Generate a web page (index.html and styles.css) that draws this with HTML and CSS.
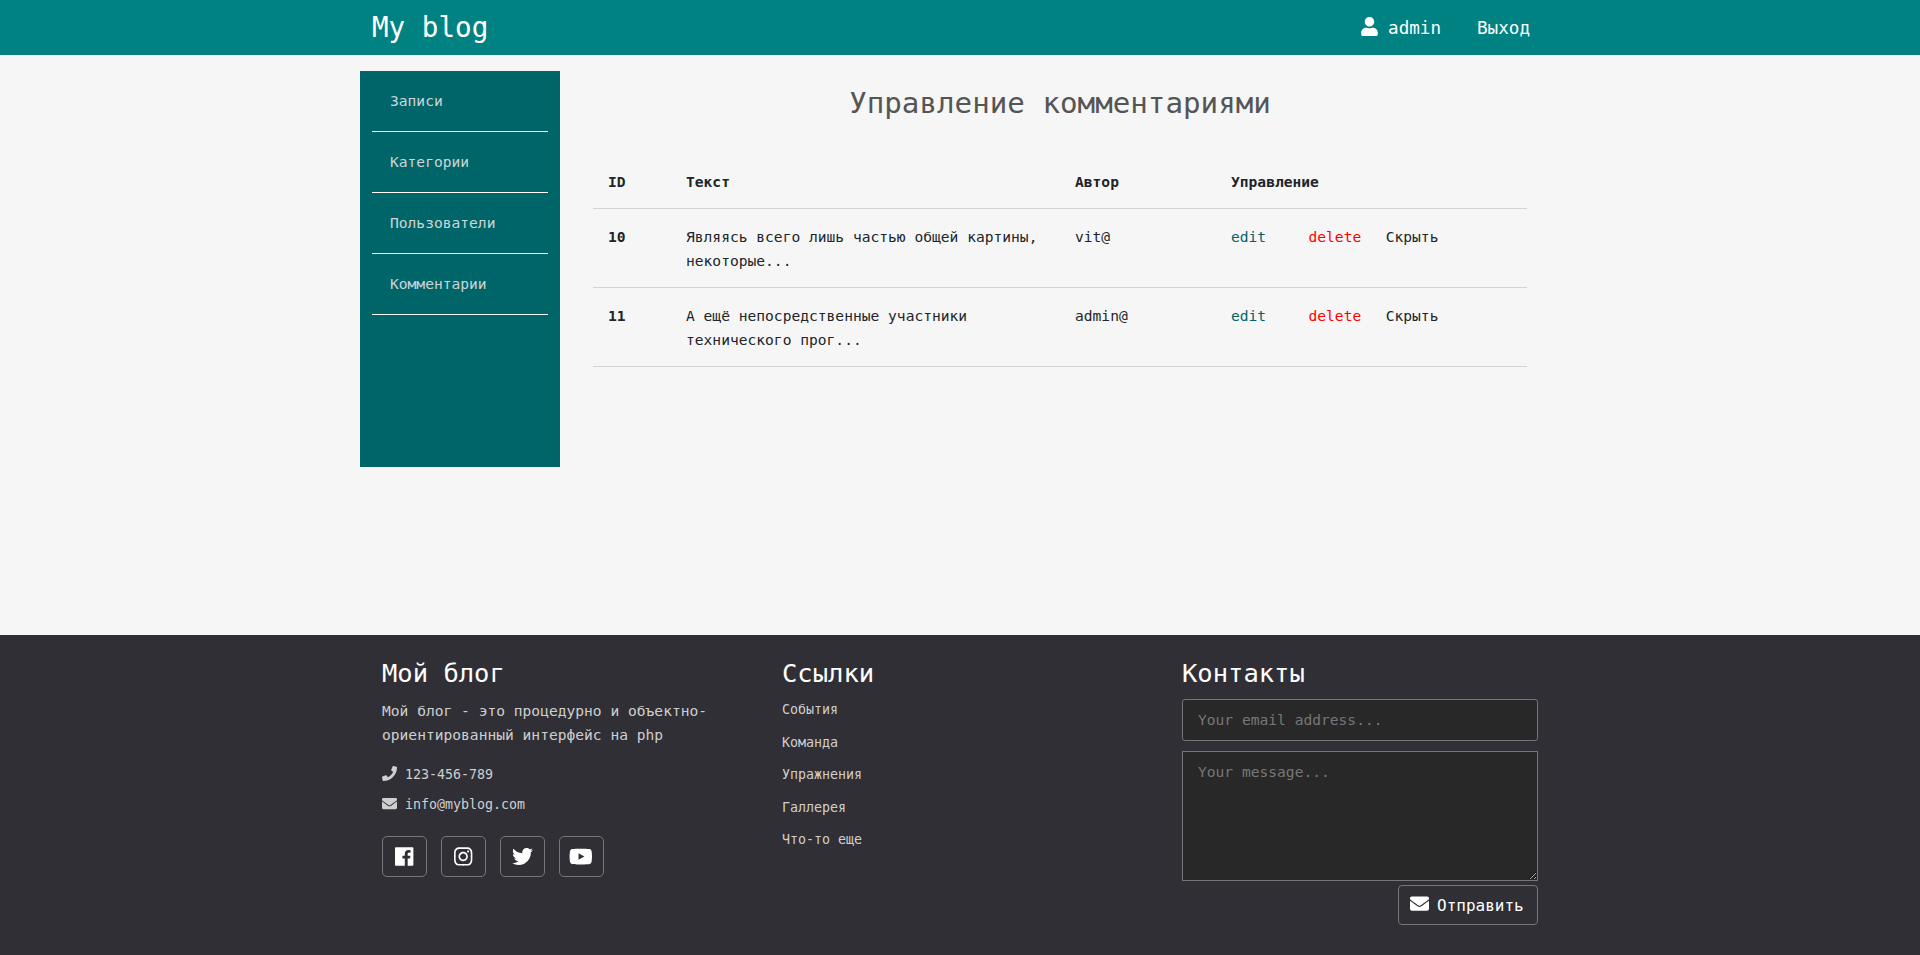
FILE: index.html
```html
<!DOCTYPE html>
<html lang="ru">
<head>
  <meta charset="UTF-8" />
  <meta name="viewport" content="width=device-width, initial-scale=1.0"/>
  <title>My blog</title>
  <link rel="stylesheet" href="styles.css">
</head>
<body>
  <header class="topbar">
    <div class="wrap topbar-inner">
      <a class="logo" href="#">My blog</a>
      <nav class="user-nav">
        <a href="#" class="user-link">
          <svg class="icon-user" viewBox="0 0 448 512"><path d="M224 256c70.7 0 128-57.3 128-128S294.7 0 224 0 96 57.3 96 128s57.3 128 128 128zm89.6 32h-16.7c-22.2 10.2-46.9 16-72.9 16s-50.6-5.8-72.9-16h-16.7C60.2 288 0 348.2 0 422.4V464c0 26.5 21.5 48 48 48h352c26.5 0 48-21.5 48-48v-41.6c0-74.2-60.2-134.4-134.4-134.4z"/></svg>
          admin
        </a>
        <a href="#">Выход</a>
      </nav>
    </div>
  </header>

  <div class="wrap page">
    <aside class="sidebar">
      <ul>
        <li><a href="#">Записи</a></li>
        <li><a href="#">Категории</a></li>
        <li><a href="#">Пользователи</a></li>
        <li><a href="#">Комментарии</a></li>
      </ul>
    </aside>

    <main class="content">
      <h1>Управление комментариями</h1>
      <table class="comments">
        <thead>
          <tr>
            <th class="col-id">ID</th>
            <th class="col-text">Текст</th>
            <th class="col-author">Автор</th>
            <th>Управление</th>
          </tr>
        </thead>
        <tbody>
          <tr>
            <td class="row-id">10</td>
            <td>Являясь всего лишь частью общей картины, некоторые...</td>
            <td>vit@</td>
            <td>
              <div class="actions">
                <a class="edit" href="#">edit</a>
                <a class="delete" href="#">delete</a>
                <a class="hide" href="#">Скрыть</a>
              </div>
            </td>
          </tr>
          <tr>
            <td class="row-id">11</td>
            <td>А ещё непосредственные участники технического прог...</td>
            <td>admin@</td>
            <td>
              <div class="actions">
                <a class="edit" href="#">edit</a>
                <a class="delete" href="#">delete</a>
                <a class="hide" href="#">Скрыть</a>
              </div>
            </td>
          </tr>
        </tbody>
      </table>
    </main>
  </div>

  <footer class="footer">
    <div class="wrap footer-grid">
      <section class="footer-col">
        <h2>Мой блог</h2>
        <p class="about">Мой блог - это процедурно и объектно-ориентированный интерфейс на php</p>
        <div class="contact-line">
          <svg class="icon-small" viewBox="0 0 512 512"><path d="M493.4 24.6l-104-24c-11.3-2.6-22.9 3.3-27.5 13.9l-48 112c-4.2 9.8-1.4 21.3 6.9 28l60.6 49.6c-36 76.7-98.9 140.5-177.2 177.2l-49.6-60.6c-6.8-8.3-18.2-11.1-28-6.9l-112 48C3.9 366.5-2 378.1.6 389.4l24 104C27.1 504.2 36.7 512 48 512c256.1 0 464-207.5 464-464 0-11.2-7.7-20.9-18.6-23.4z"/></svg>
          123-456-789
        </div>
        <div class="contact-line">
          <svg class="icon-small" viewBox="0 0 512 512"><path d="M502.3 190.8c3.9-3.1 9.7-.2 9.7 4.7V400c0 26.5-21.5 48-48 48H48c-26.5 0-48-21.5-48-48V195.6c0-5 5.7-7.8 9.7-4.7 22.4 17.4 52.1 39.5 154.1 113.6 21.1 15.4 56.7 47.8 92.2 47.6 35.7.3 72-32.8 92.3-47.6 102-74.1 131.6-96.3 154-113.7zM256 320c23.2.4 56.6-29.2 73.4-41.4 132.7-96.3 142.8-104.7 173.4-128.7 5.8-4.5 9.2-11.5 9.2-18.9v-19c0-26.5-21.5-48-48-48H48C21.5 64 0 85.5 0 112v19c0 7.4 3.4 14.3 9.2 18.9 30.6 23.9 40.7 32.4 173.4 128.7 16.8 12.2 50.2 41.8 73.4 41.4z"/></svg>
          info@myblog.com
        </div>
        <div class="socials">
          <a href="#"><svg viewBox="0 0 448 512"><path d="M448 56.7v398.5c0 13.7-11.1 24.7-24.7 24.7H309.1V306.5h58.2l8.7-67.6h-67v-43.2c0-19.6 5.4-32.9 33.5-32.9h35.8v-60.5c-6.2-.8-27.4-2.7-52.2-2.7-51.6 0-87 31.5-87 89.4v49.9h-58.4v67.6h58.4V480H24.7C11.1 480 0 468.9 0 455.3V56.7C0 43.1 11.1 32 24.7 32h398.5c13.7 0 24.8 11.1 24.8 24.7z"/></svg></a>
          <a href="#"><svg viewBox="0 0 448 512"><path d="M224.1 141c-63.6 0-114.9 51.3-114.9 114.9s51.3 114.9 114.9 114.9S339 319.5 339 255.9 287.7 141 224.1 141zm0 189.6c-41.1 0-74.7-33.5-74.7-74.7s33.5-74.7 74.7-74.7 74.7 33.5 74.7 74.7-33.6 74.7-74.7 74.7zm146.4-194.3c0 14.9-12 26.8-26.8 26.8-14.9 0-26.8-12-26.8-26.8s12-26.8 26.8-26.8 26.8 12 26.8 26.8zm76.1 27.2c-1.7-35.9-9.9-67.7-36.2-93.9-26.2-26.2-58-34.4-93.9-36.2-37-2.1-147.9-2.1-184.9 0-35.8 1.7-67.6 9.9-93.9 36.1s-34.4 58-36.2 93.9c-2.1 37-2.1 147.9 0 184.9 1.7 35.9 9.9 67.7 36.2 93.9s58 34.4 93.9 36.2c37 2.1 147.9 2.1 184.9 0 35.9-1.7 67.7-9.9 93.9-36.2 26.2-26.2 34.4-58 36.2-93.9 2.1-37 2.1-147.8 0-184.8zM398.8 388c-7.8 19.6-22.9 34.7-42.6 42.6-29.5 11.7-99.5 9-132.1 9s-102.7 2.6-132.1-9c-19.6-7.8-34.7-22.9-42.6-42.6-11.7-29.5-9-99.5-9-132.1s-2.6-102.7 9-132.1c7.8-19.6 22.9-34.7 42.6-42.6 29.5-11.7 99.5-9 132.1-9s102.7-2.6 132.1 9c19.6 7.8 34.7 22.9 42.6 42.6 11.7 29.5 9 99.5 9 132.1s2.7 102.7-9 132.1z"/></svg></a>
          <a href="#"><svg viewBox="0 0 512 512"><path d="M459.37 151.716c.325 4.548.325 9.097.325 13.645 0 138.72-105.583 298.558-298.558 298.558-59.452 0-114.68-17.219-161.137-47.106 8.447.974 16.568 1.299 25.34 1.299 49.055 0 94.213-16.568 130.274-44.832-46.132-.975-84.792-31.188-98.112-72.772 6.498.974 12.995 1.624 19.818 1.624 9.421 0 18.843-1.3 27.614-3.573-48.081-9.747-84.143-51.98-84.143-102.985v-1.299c13.969 7.797 30.214 12.67 47.431 13.319-28.264-18.843-46.781-51.005-46.781-87.391 0-19.492 5.197-37.36 14.294-52.954 51.655 63.675 129.3 105.258 216.365 109.807-1.624-7.797-2.599-15.918-2.599-24.04 0-57.828 46.782-104.934 104.934-104.934 30.213 0 57.502 12.67 76.67 33.137 23.715-4.548 46.456-13.32 66.599-25.34-7.798 24.366-24.366 44.833-46.132 57.827 21.117-2.273 41.584-8.122 60.426-16.243-14.292 20.791-32.161 39.308-52.628 54.253z"/></svg></a>
          <a href="#"><svg viewBox="0 0 576 512"><path d="M549.655 124.083c-6.281-23.65-24.787-42.276-48.284-48.597C458.781 64 288 64 288 64S117.22 64 74.629 75.486c-23.497 6.322-42.003 24.947-48.284 48.597-11.412 42.867-11.412 132.305-11.412 132.305s0 89.438 11.412 132.305c6.281 23.65 24.787 41.5 48.284 47.821C117.22 448 288 448 288 448s170.78 0 213.371-11.486c23.497-6.321 42.003-24.171 48.284-47.821 11.412-42.867 11.412-132.305 11.412-132.305s0-89.438-11.412-132.305zm-317.51 213.508V175.185l142.739 81.205-142.739 81.201z"/></svg></a>
        </div>
      </section>

      <section class="footer-col">
        <h2>Ссылки</h2>
        <ul class="footer-links">
          <li><a href="#">События</a></li>
          <li><a href="#">Команда</a></li>
          <li><a href="#">Упражнения</a></li>
          <li><a href="#">Галлерея</a></li>
          <li><a href="#">Что-то еще</a></li>
        </ul>
      </section>

      <section class="footer-col">
        <h2>Контакты</h2>
        <form class="contact-form">
          <input type="text" placeholder="Your email address..." />
          <textarea placeholder="Your message..."></textarea>
          <button type="button">
            <svg viewBox="0 0 512 512"><path d="M502.3 190.8c3.9-3.1 9.7-.2 9.7 4.7V400c0 26.5-21.5 48-48 48H48c-26.5 0-48-21.5-48-48V195.6c0-5 5.7-7.8 9.7-4.7 22.4 17.4 52.1 39.5 154.1 113.6 21.1 15.4 56.7 47.8 92.2 47.6 35.7.3 72-32.8 92.3-47.6 102-74.1 131.6-96.3 154-113.7zM256 320c23.2.4 56.6-29.2 73.4-41.4 132.7-96.3 142.8-104.7 173.4-128.7 5.8-4.5 9.2-11.5 9.2-18.9v-19c0-26.5-21.5-48-48-48H48C21.5 64 0 85.5 0 112v19c0 7.4 3.4 14.3 9.2 18.9 30.6 23.9 40.7 32.4 173.4 128.7 16.8 12.2 50.2 41.8 73.4 41.4z"/></svg>
            Отправить
          </button>
        </form>
      </section>
    </div>
  </footer>
</body>
</html>
```

FILE: styles.css
```css
* {
  box-sizing: border-box;
}

body {
  margin: 0;
  background: #f6f6f6;
  color: #212529;
  font-family: 'DejaVu Sans Mono', monospace;
  font-size: 14.6px;
  line-height: 24px;
}

a {
  color: inherit;
  text-decoration: none;
}

ul {
  list-style: none;
  margin: 0;
  padding: 0;
}

.wrap {
  width: 1200px;
  margin: 0 auto;
}

/* top bar */
.topbar {
  height: 55px;
  background: #008282;
  color: #fff;
}

.topbar-inner {
  display: flex;
  justify-content: space-between;
  align-items: center;
  height: 55px;
  padding: 0 30px 0 12px;
}

.logo {
  font-size: 27.6px;
  line-height: 55px;
}

.user-nav {
  display: flex;
  align-items: center;
  gap: 36px;
  font-size: 17.6px;
}

.user-link {
  display: flex;
  align-items: center;
  gap: 10px;
}

.icon-user {
  width: 17px;
  height: 19px;
  margin-top: -2px;
  fill: #fff;
}

/* page */
.page {
  display: flex;
  height: 580px;
  padding-top: 16px;
}

.sidebar {
  width: 200px;
  height: 396px;
  padding: 0 12px;
  background: #006569;
}

.sidebar li {
  height: 61px;
  border-bottom: 1px solid #fff;
  padding: 18px 0 0 18px;
  color: #ccd6d6;
}

.content {
  width: 934px;
  margin-left: 33px;
}

.content h1 {
  margin: 14px 0 0;
  color: #555;
  font-size: 29.2px;
  font-weight: 400;
  line-height: 36px;
  text-align: center;
}

.comments {
  width: 100%;
  margin-top: 33px;
  border-collapse: collapse;
  table-layout: fixed;
}

.comments th,
.comments td {
  padding: 16px 15px 14px;
  text-align: left;
  vertical-align: top;
  border-bottom: 1px solid #d3d3d3;
}

.col-id {
  width: 78px;
}

.col-text {
  width: 389px;
}

.col-author {
  width: 156px;
}

.row-id {
  font-weight: bold;
}

.actions {
  display: flex;
  gap: 24.5px;
}

.edit {
  width: 53px;
  color: #006569;
}

.delete {
  color: #ff0000;
}

/* footer */
.footer {
  height: 320px;
  background: #302f36;
  color: #cfcfcf;
}

.footer-grid {
  display: grid;
  grid-template-columns: repeat(3, 400px);
}

.footer-col {
  padding: 20px 22px 0;
}

.footer-col h2 {
  margin: 0 0 8px;
  color: #fff;
  font-size: 25.5px;
  font-weight: 400;
  line-height: 36px;
}

.about {
  margin: 0 0 13px;
}

.contact-line {
  display: flex;
  align-items: center;
  gap: 8px;
  height: 30px;
  font-size: 13.3px;
}

.icon-small {
  width: 15px;
  height: 15px;
  margin-top: -3px;
  fill: #cfcfcf;
}

.socials {
  display: flex;
  gap: 13.9px;
  margin-top: 16px;
}

.socials a {
  display: flex;
  align-items: center;
  justify-content: center;
  width: 45px;
  height: 41px;
  border: 1px solid #777;
  border-radius: 5px;
}

.socials svg {
  height: 21px;
  fill: #fff;
}

.footer-links {
  margin-top: -1px;
}

.footer-links li {
  height: 32.5px;
  font-size: 13.3px;
}

.contact-form {
  display: flex;
  flex-direction: column;
  align-items: flex-end;
}

.contact-form input,
.contact-form textarea {
  width: 356px;
  border: 1px solid #777;
  background: #282828;
  color: #fff;
  font-family: inherit;
  font-size: 14.6px;
  padding: 0 15px;
}

.contact-form input {
  height: 42px;
  margin-bottom: 10px;
  padding-bottom: 2px;
  border-radius: 3px;
}

.contact-form textarea {
  height: 130px;
  padding-top: 11px;
  border-radius: 0;
}

.contact-form ::placeholder {
  color: #777;
}

.contact-form button {
  display: flex;
  align-items: center;
  gap: 8px;
  width: 140px;
  height: 40px;
  margin-top: 4px;
  padding: 0 11px;
  border: 1px solid #777;
  border-radius: 4px;
  background: transparent;
  color: #fff;
  font-family: inherit;
  font-size: 16px;
}

.contact-form button svg {
  width: 19px;
  height: 19px;
  margin-top: -3px;
  fill: #fff;
}
```
